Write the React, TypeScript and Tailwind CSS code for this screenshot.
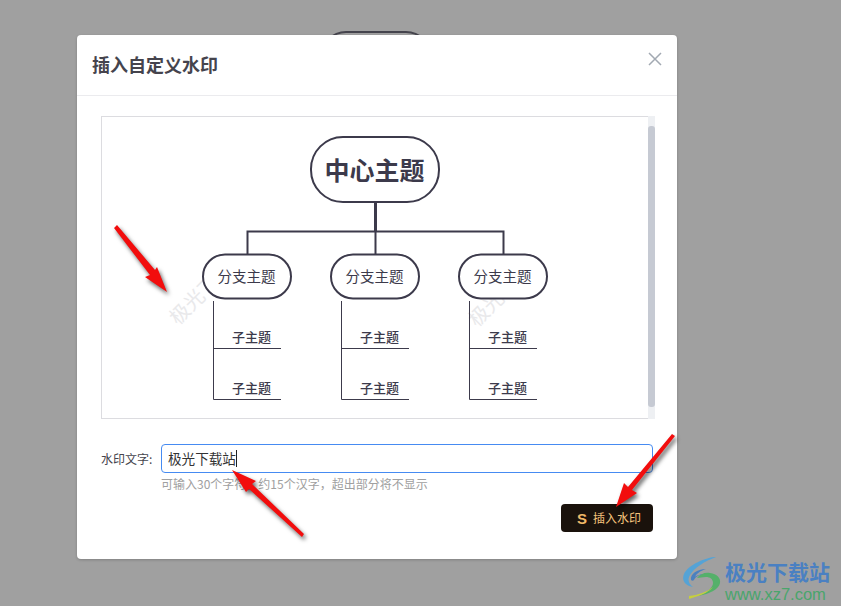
const cjk = "font-['Noto_Sans_CJK_SC','Liberation_Sans',sans-serif]";
const ink = '#3c3a4b';

function Branch({ dx }: { dx: number }) {
  return (
    <g>
      <rect x={203 + dx} y={254.5} width={88} height={44} rx={22} fill="#fff" stroke={ink} strokeWidth={2} />
      <text x={246.5 + dx} y={282} textAnchor="middle" fontSize={14.5} fill={ink}>分支主题</text>
      <path d={`M${213.5 + dx} 301V399.5H${281 + dx}M${213.5 + dx} 348.5H${281 + dx}`} fill="none" stroke={ink} strokeWidth={1} />
      <text x={251.5 + dx} y={341.5} textAnchor="middle" fontSize={13} fontWeight={500} fill={ink}>子主题</text>
      <text x={251.5 + dx} y={392.5} textAnchor="middle" fontSize={13} fontWeight={500} fill={ink}>子主题</text>
    </g>
  );
}

function MindMap() {
  return (
    <svg viewBox="102 117 552 301" className="block h-full w-full" style={{ fontFamily: "'Noto Sans CJK SC', sans-serif" }}>
      <text x={178} y={326} fontSize={20} fill="#e9e9eb" transform="rotate(-45 178 326)">极光下</text>
      <text x={477} y={328} fontSize={20} fill="#e9e9eb" transform="rotate(-45 477 328)">极光下</text>
      <path d="M375.5 203V231" stroke={ink} strokeWidth={3} />
      <path d="M247.5 254V231.5H503.5V254M375.5 231V254" fill="none" stroke={ink} strokeWidth={2} />
      <rect x={311} y={137} width={128} height={65} rx={32} fill="#fff" stroke={ink} strokeWidth={2} />
      <text x={374.5} y={180} textAnchor="middle" fontSize={25} fontWeight={700} fill={ink}>中心主题</text>
      <Branch dx={0} />
      <Branch dx={128} />
      <Branch dx={256} />
    </svg>
  );
}

function Arrow({ points }: { points: string }) {
  return <polygon points={points} fill="#f20d0d" />;
}

function Arrows() {
  return (
    <svg viewBox="0 0 841 606" className="pointer-events-none absolute inset-0 h-[606px] w-[841px] drop-shadow-[2px_3px_2px_rgba(0,0,0,0.6)]">
      <Arrow points="114,228 117,225 155,270 157,267 167,292 145,277 150,275" />
      <Arrow points="304,534 302,537 249,489 246,492 232,470 256,481 252,484" />
      <Arrow points="672,434 675,436 632,490 637,493 616,507 624,483 628,487" />
    </svg>
  );
}

function Logo() {
  return (
    <div className={`absolute left-[682px] top-[556px] flex items-start gap-[3px] ${cjk}`}>
      <svg viewBox="0 0 40 44" className="h-[44px] w-[40px]">
        <path d="M34 1C24 1 6 9 2 18c-3 7 2 12 9 13-4-3-6-7-3-12C12 12 23 5 34 1Z" fill="#55a3d6" />
        <path d="M9 24c-1-6 6-11 15-11-6 2-10 5-11 8 1-1 5-3 9-3-5 1-9 3-10 6-1 1-2 1-3 0Z" fill="#4a80c0" />
        <path d="M15 22c3-4 8-6 13-5 7 1 11 5 10 10-1 6-10 11-22 13 9-4 15-8 15-13 0-4-3-6-7-6-4 0-6 1-9 1Z" fill="#55b06a" />
        <path d="M7 40c9-1 18-4 24-9-3 4-11 8-15 9l-9 3Z" fill="#c6cf3c" />
      </svg>
      <div className="flex flex-col">
        <span className="text-[21px] leading-[30px] font-bold whitespace-nowrap text-[#4a80c2]">极光下载站</span>
        <span className="mt-[-1px] font-['Liberation_Sans',sans-serif] text-[16.5px] leading-[18px] whitespace-nowrap text-[#4aa56c]">www.xz7.com</span>
      </div>
    </div>
  );
}

export default function App() {
  return (
    <div className={`relative h-[606px] w-[841px] overflow-hidden bg-[#a0a0a0] pt-[35px] pl-[77px] ${cjk}`}>
      <div className="absolute top-[31px] left-[320px] h-[40px] w-[112px] rounded-t-[26px] border-2 border-b-0 border-[#45444d]" />
      <div className="relative flex h-[524px] w-[600px] flex-col rounded-[4px] bg-white shadow-[0_1px_3px_rgba(0,0,0,0.2)]">
        <div className="flex h-[61px] items-center justify-between border-b border-[#ebebee] px-[15px]">
          <h1 className="mb-[2px] text-[18px] leading-[58px] font-bold text-[#45444d]">插入自定义水印</h1>
          <svg viewBox="0 0 14 14" className="mb-[12px] h-[14px] w-[14px]">
            <path d="M1 1L13 13M13 1L1 13" stroke="#a2a9b2" strokeWidth={1.5} fill="none" />
          </svg>
        </div>
        <div className="px-[24px] pt-[20px]">
          <div className="relative h-[303px] w-[554px] border border-[#dcdce0] bg-white">
            <MindMap />
            <div className="absolute top-[-1px] right-[-1px] bottom-[-1px] w-[7px] bg-[#eef0f3] pt-[10px] pb-[12px]">
              <div className="h-full w-full rounded-[3px] bg-[#c6cad3]" />
            </div>
          </div>
          <div className="mt-[25px] flex items-center">
            <label className="w-[60px] text-[12px] text-[#45444d]">水印文字:</label>
            <div className="flex h-[29px] w-[492px] items-center rounded-[4px] border border-[#468bf2] px-[6px] text-[13.6px] text-[#333]">
              极光下载站<span className="h-[17px] w-px bg-[#222]" />
            </div>
          </div>
          <p className="mt-[2px] ml-[60px] text-[12px] leading-[18px] text-[#a0a0a0]">可输入30个字符，约15个汉字，超出部分将不显示</p>
          <div className="mt-[11px] flex justify-end">
            <button className="flex h-[28px] w-[92px] items-center rounded-[4px] bg-[#1a120c] pl-[16px] text-[12px] text-[#f4c27c]">
              <span className="mr-[8px] w-[8px] font-['Liberation_Sans',sans-serif] text-[15px] leading-none font-bold text-[#f0b868]">S</span>
              插入水印
            </button>
          </div>
        </div>
      </div>
      <Arrows />
      <Logo />
    </div>
  );
}
